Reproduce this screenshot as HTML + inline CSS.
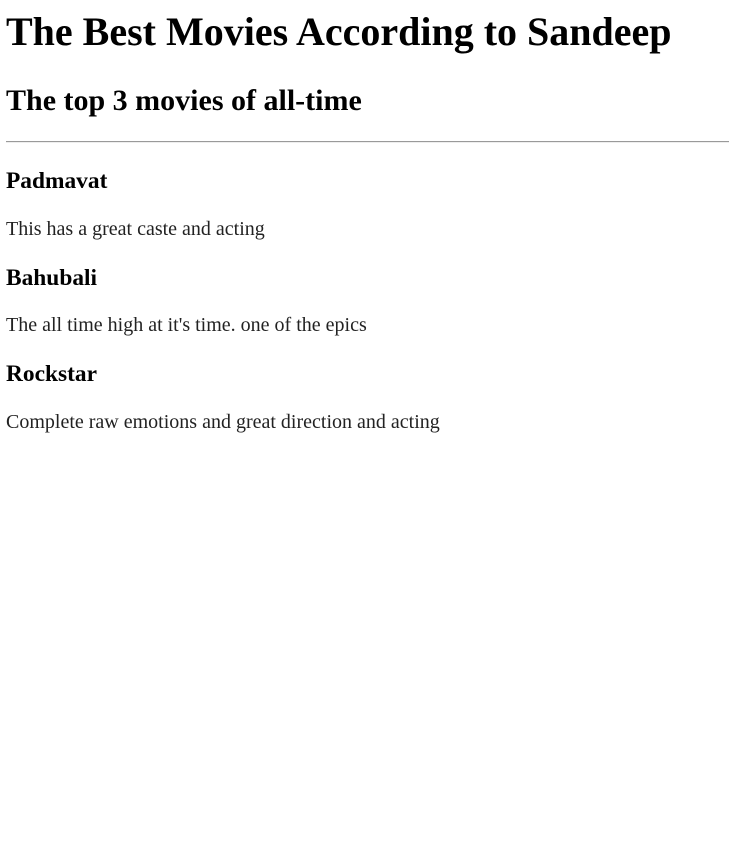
<!DOCTYPE html>
<html><head><style>
html,body{margin:0;padding:0;background:#fff;}
body{font-family:"Liberation Serif","Times New Roman",serif;color:#000;padding:9px 8px 0 6px;font-size:20px;}
h1{font-size:40px;margin:0;line-height:46px;font-weight:bold;}
h2{font-size:30px;margin:28px 0 0;line-height:35px;font-weight:bold;}
hr{margin:23px 0 0;border:0;border-top:1px solid #9a9a9a;border-bottom:1px solid #eee;height:0;}
h3{font-size:23.4px;line-height:27px;margin:25px 0 0;font-weight:bold;}
p{margin:23px 0 0;line-height:23px;color:#222;}
h3+p{margin-top:22.5px;}
p+h3{margin-top:24px;}
</style></head><body>
<h1>The Best Movies According to Sandeep</h1>
<h2>The top 3 movies of all-time</h2>
<hr>
<h3>Padmavat</h3>
<p>This has a great caste and acting</p>
<h3>Bahubali</h3>
<p>The all time high at it's time. one of the epics</p>
<h3>Rockstar</h3>
<p>Complete raw emotions and great direction and acting</p>
</body></html>
